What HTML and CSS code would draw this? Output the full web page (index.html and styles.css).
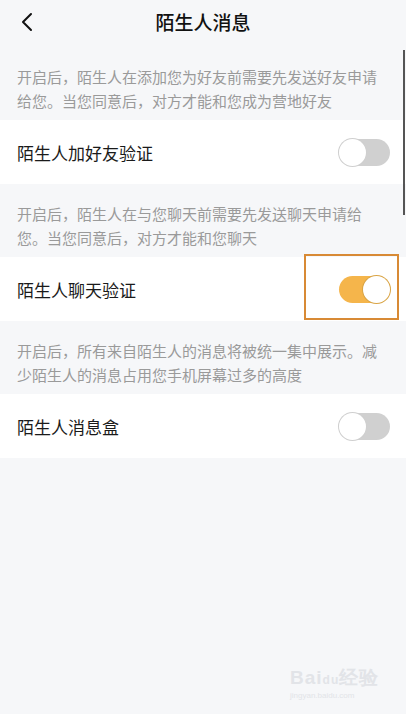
FILE: index.html
```html
<!DOCTYPE html>
<html lang="zh">
<head>
<meta charset="utf-8">
<link rel="stylesheet" href="styles.css">
</head>
<body>
<div class="page">
  <header class="topbar">
    <svg class="back" width="12" height="20" viewBox="0 0 12 20"><path d="M10 2 L2 10 L10 18" fill="none" stroke="#111" stroke-width="2" stroke-linecap="round" stroke-linejoin="round"/></svg>
    <h1 class="title">陌生人消息</h1>
  </header>
  <p class="desc">开启后，陌生人在添加您为好友前需要先发送好友申请给您。当您同意后，对方才能和您成为营地好友</p>
  <div class="row">
    <span class="label">陌生人加好友验证</span>
    <span class="switch"><span class="knob"></span></span>
  </div>
  <p class="desc">开启后，陌生人在与您聊天前需要先发送聊天申请给您。当您同意后，对方才能和您聊天</p>
  <div class="row">
    <span class="label">陌生人聊天验证</span>
    <span class="switch on"><span class="knob"></span></span>
    <span class="highlight"></span>
  </div>
  <p class="desc">开启后，所有来自陌生人的消息将被统一集中展示。减少陌生人的消息占用您手机屏幕过多的高度</p>
  <div class="row">
    <span class="label">陌生人消息盒</span>
    <span class="switch"><span class="knob"></span></span>
  </div>
  <div class="scrollbar"></div>
  <div class="watermark"><span class="wm-main">Bai<span class="du">du</span>经验</span><span class="wm-sub">jingyan.baidu.com</span></div>
</div>
</body>
</html>
```
FILE: styles.css
```css
* { box-sizing: border-box; }
html, body { margin: 0; padding: 0; }
body {
  background: #f6f7f9;
  font-family: "Noto Sans CJK SC", "Noto Sans", sans-serif;
  width: 406px;
  height: 714px;
  overflow: hidden;
}
.page { position: relative; width: 406px; height: 714px; }
.topbar {
  height: 47px;
  display: flex;
  align-items: center;
  justify-content: center;
  position: relative;
}
.back { position: absolute; left: 21px; top: 12px; }
.title {
  margin: 0;
  font-size: 19px;
  font-weight: 500;
  color: #111;
  line-height: 26px;
  margin-top: -3px;
}
.desc {
  margin: 0;
  padding: 18px 24px 7px 17px;
  font-size: 15px;
  line-height: 24px;
  color: #9a9a9a;
}
.row {
  position: relative;
  background: #fff;
  height: 64px;
  display: flex;
  align-items: center;
  justify-content: space-between;
  padding: 0 16px 0 17px;
}
.label { font-size: 17px; color: #1a1a1a; }
.switch {
  width: 51px;
  height: 27px;
  border-radius: 14px;
  background: #d0d0d0;
  position: relative;
  display: block;
}
.switch .knob {
  position: absolute;
  left: 0;
  top: 0;
  width: 27px;
  height: 27px;
  border-radius: 50%;
  background: #fff;
  box-shadow: 0 0 0 1px #cfcfcf;
}
.switch.on { background: #f5b54b; }
.switch.on .knob { left: auto; right: 0; box-shadow: 0 0 0 1px #d9a445; }
.highlight {
  position: absolute;
  left: 304px;
  top: -3px;
  width: 95px;
  height: 66px;
  border: 2px solid #d88a35;
}
.scrollbar {
  position: absolute;
  right: 1px;
  top: 50px;
  width: 2px;
  height: 165px;
  background: #555;
}
.watermark {
  position: absolute;
  left: 290px;
  top: 665px;
  display: flex;
  flex-direction: column;
  color: #e2e4e8;
  font-family: "Liberation Sans", sans-serif;
}
.wm-main { font-size: 19px; font-weight: 700; letter-spacing: 1px; }
.du { font-size: 12px; }
.wm-sub { font-size: 8px; }
```
